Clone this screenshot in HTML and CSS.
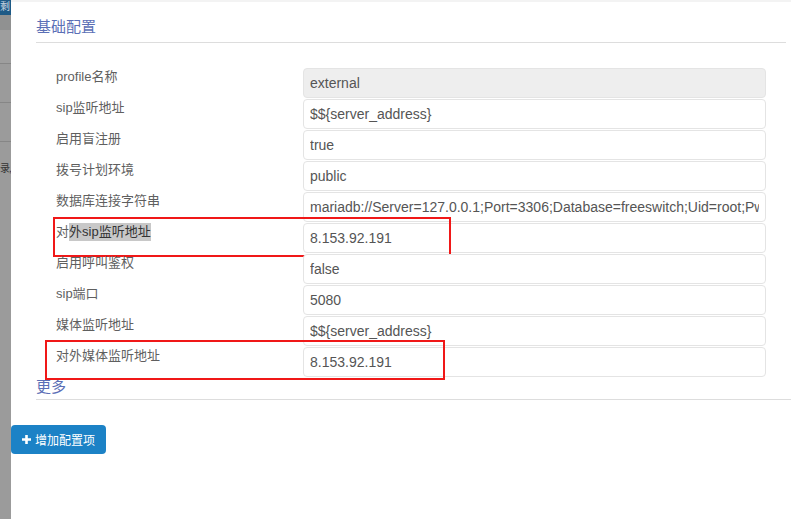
FILE: index.html
```html
<!DOCTYPE html>
<html lang="zh-CN">
    <head>
        <meta charset="UTF-8">
        <title>profile 配置</title>
        <link rel="stylesheet" href="styles.css">
    </head>

    <body>
        <!-- the page behind the dialog, dimmed -->
        <div class="behind">
            <div class="behind-bar">剩</div>
            <div class="behind-tab"></div>
            <div class="behind-row behind-first"></div>
            <div class="behind-row"></div>
            <div class="behind-row"></div>
            <div class="behind-text">录,</div>
        </div>

        <div class="dialog">
            <h3 class="section-title">基础配置</h3>

            <form class="config-form" name="profileForm" action="" method="GET">
                <div class="form-row">
                    <label for="pname">profile名称</label>
                    <input id="pname" class="field field-readonly" type="text" value="external" readonly>
                </div>
                <div class="form-row">
                    <label for="sipip">sip监听地址</label>
                    <input id="sipip" class="field" type="text" value="$${server_address}">
                </div>
                <div class="form-row">
                    <label for="blind">启用盲注册</label>
                    <input id="blind" class="field" type="text" value="true">
                </div>
                <div class="form-row">
                    <label for="context">拨号计划环境</label>
                    <input id="context" class="field" type="text" value="public">
                </div>
                <div class="form-row">
                    <label for="odbc">数据库连接字符串</label>
                    <input id="odbc" class="field" type="text" value="mariadb://Server=127.0.0.1;Port=3306;Database=freeswitch;Uid=root;Pwd=">
                </div>
                <div class="form-row">
                    <label for="extsip">对<span class="selected">外sip监听地址</span></label>
                    <input id="extsip" class="field" type="text" value="8.153.92.191">
                    <div class="mark mark-sip"></div>
                </div>
                <div class="form-row">
                    <label for="auth">启用呼叫鉴权</label>
                    <input id="auth" class="field" type="text" value="false">
                </div>
                <div class="form-row">
                    <label for="port">sip端口</label>
                    <input id="port" class="field" type="text" value="5080">
                </div>
                <div class="form-row">
                    <label for="rtpip">媒体监听地址</label>
                    <input id="rtpip" class="field" type="text" value="$${server_address}">
                </div>
                <div class="form-row">
                    <label for="extrtp">对外媒体监听地址</label>
                    <input id="extrtp" class="field" type="text" value="8.153.92.191">
                    <div class="mark mark-rtp"></div>
                </div>
            </form>

            <h3 class="section-title section-more">更多</h3>

            <button type="button" class="btn-add">
                <svg width="9" height="9" viewBox="0 0 9 9"><path d="M3.2 0h2.6v3.2H9v2.6H5.8V9H3.2V5.8H0V3.2h3.2z" fill="#fff"/></svg>
                增加配置项
            </button>
        </div>
    </body>
</html>
```

FILE: styles.css
```css
html, body {
    margin: 0;
    height: 100%;
}

body {
    display: flex;
    overflow: hidden;
    font-family: "Liberation Sans", "Noto Sans CJK SC", sans-serif;
    background-color: #ffffff;
}

/* dimmed page behind the dialog */
.behind {
    width: 11px;
    flex-shrink: 0;
    background-color: #9b9b9b;
    overflow: hidden;
}

.behind-bar {
    height: 15px;
    background-color: #1d5a86;
    color: #c9d6e2;
    font-size: 10px;
    line-height: 13px;
    overflow: hidden;
}

.behind-tab {
    height: 15px;
    background-color: #909191;
}

.behind-row {
    height: 38px;
    border-bottom: 1px solid #868686;
}

.behind-first {
    height: 33px;
    background-color: #9e9e9e;
}

.behind-text {
    margin-top: 18px;
    font-size: 10px;
    letter-spacing: -1px;
    color: #333333;
    white-space: nowrap;
    overflow: hidden;
}

/* dialog */
.dialog {
    flex: 1;
    border-top: 2px solid #f3f3f3;
    padding: 0 5px 0 25px;
}

.section-title {
    margin: 0;
    padding: 15px 0 5px 0;
    font-size: 15px;
    line-height: 20px;
    font-weight: normal;
    color: #5b6fb6;
    border-bottom: 1px solid #dddddd;
}

.section-more {
    padding-top: 0;
    padding-bottom: 2px;
    margin-top: -2px;
    margin-right: -5px;
}

.config-form {
    margin: 25px 0 0 0;
    padding-left: 20px;
}

.form-row {
    position: relative;
    display: grid;
    grid-template-columns: 247px 463px;
    margin-bottom: 1px;
}

.form-row:last-child {
    margin-bottom: 2px;
}

label {
    font-size: 13px;
    line-height: 17px;
    color: #5f5f5f;
}

.selected {
    background-color: #c8c8c8;
    color: #333333;
    padding: 1px 0 2px 0;
}

.field {
    box-sizing: border-box;
    height: 30px;
    margin: 0;
    padding: 0 6px;
    border: 1px solid #e4e4e4;
    border-radius: 4px;
    font-family: "Liberation Sans", "Noto Sans CJK SC", sans-serif;
    font-size: 14px;
    color: #555555;
    background-color: #ffffff;
    outline: none;
}

.field-readonly {
    background-color: #eeeeee;
}

/* red annotation frames drawn over the screenshot */
.mark {
    position: absolute;
    box-sizing: border-box;
    border: 2px solid #f01818;
    height: 40px;
    pointer-events: none;
}

.mark-sip {
    left: -3px;
    top: -6px;
    width: 398px;
}

.mark-rtp {
    left: -11px;
    top: -7px;
    width: 400px;
}

.btn-add {
    display: flex;
    align-items: center;
    gap: 4px;
    margin: 25px 0 0 -25px;
    height: 29px;
    width: 95px;
    padding: 0 0 0 11px;
    border: none;
    border-radius: 4px;
    background-color: #1c82c6;
    color: #ffffff;
    font-family: "Liberation Sans", "Noto Sans CJK SC", sans-serif;
    font-size: 12px;
}
```
